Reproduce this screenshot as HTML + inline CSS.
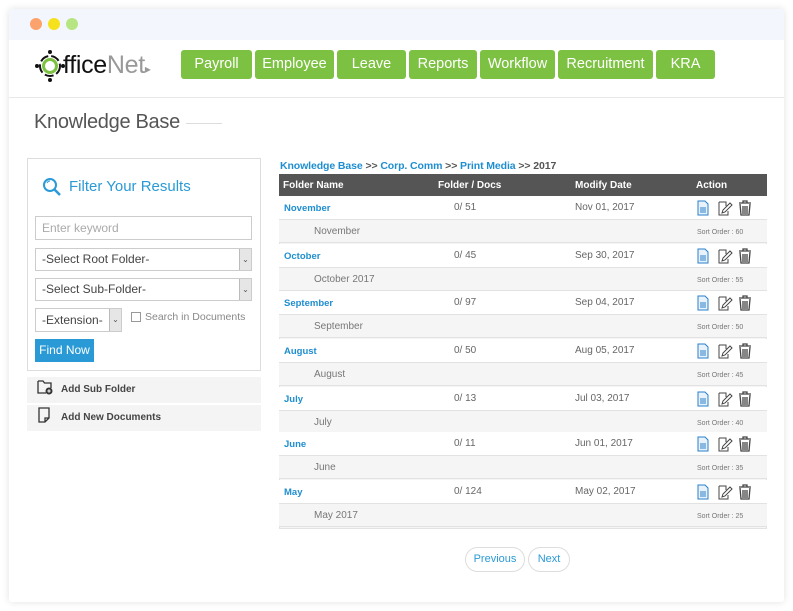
<!DOCTYPE html>
<html><head><meta charset="utf-8">
<style>
*{margin:0;padding:0;box-sizing:border-box}
body{width:793px;height:611px;background:#fff;font-family:"Liberation Sans",Arial,sans-serif;position:relative;overflow:hidden}
.abs{position:absolute}
.card{left:9px;top:9px;width:775px;height:593px;background:#fff;box-shadow:0 0 8px rgba(0,0,0,.12);border-radius:3px}
.bar{left:9px;top:9px;width:775px;height:31px;background:#f3f6fd}
.dot{width:12px;height:12px;border-radius:50%;top:18px}
.nav{top:50px;height:29px;background:#7dc142;color:#fff;font-size:14.5px;line-height:29px;text-align:center;border-radius:3px}
.lnk{color:#1e8ed0}
.th{top:174px;height:22px;background:#555;left:279px;width:488px;color:#fff;font-size:10px;font-weight:bold}
.row{left:279px;width:488px;font-size:10px;color:#666}
.main{background:#fff;border-bottom:1px solid #e2e2e2}
.sub{background:#f5f5f5;border-bottom:1px solid #e2e2e2}
.fld{position:absolute;border:1px solid #ccc;background:#fff;font-size:12px;color:#444;padding-left:6px}
.arr{position:absolute;right:0;top:0;bottom:0;width:12px;background:#e6e6e6;border-left:1px solid #bbb;font-size:8px;text-align:center;color:#555}
</style></head><body>
<div class="abs card"></div>
<div class="abs bar"></div>
<div class="abs dot" style="left:30px;background:#fca26d"></div>
<div class="abs dot" style="left:48px;background:#f6e21c"></div>
<div class="abs dot" style="left:66px;background:#b7e582"></div>
<div class="abs" style="left:9px;top:97px;width:775px;height:1px;background:#e8e8e8"></div>
<svg class="abs" style="left:34px;top:48px" width="32" height="36" viewBox="0 0 32 36">
<circle cx="16" cy="18" r="10" fill="none" stroke="#111" stroke-width="2" stroke-dasharray="9 3"/>
<circle cx="16" cy="18" r="6.5" fill="none" stroke="#7dc142" stroke-width="3"/>
<circle cx="16" cy="4" r="2" fill="#111"/><circle cx="16" cy="32" r="2" fill="#111"/>
<circle cx="3" cy="18" r="2" fill="#111"/><circle cx="29" cy="18" r="2" fill="#111"/>
</svg>
<div class="abs" style="left:63px;top:51px;font-size:25px;letter-spacing:-0.3px;color:#111">ffice<span style="color:#999">Net</span><span style="color:#999;font-size:12px">▸</span></div>
<div class="abs nav" style="left:181px;width:71px">Payroll</div>
<div class="abs nav" style="left:255px;width:79px">Employee</div>
<div class="abs nav" style="left:337px;width:69px">Leave</div>
<div class="abs nav" style="left:409px;width:68px">Reports</div>
<div class="abs nav" style="left:480px;width:75px">Workflow</div>
<div class="abs nav" style="left:558px;width:95px">Recruitment</div>
<div class="abs nav" style="left:656px;width:59px">KRA</div>
<div class="abs" style="left:34px;top:111px;font-size:20px;letter-spacing:-0.3px;color:#555">Knowledge Base</div>
<div class="abs" style="left:186px;top:123px;width:36px;height:1px;background:#ddd"></div>
<div class="abs" style="left:27px;top:158px;width:234px;height:213px;border:1px solid #ddd"></div>
<svg class="abs" style="left:42px;top:177px" width="20" height="20" viewBox="0 0 20 20"><circle cx="8" cy="8" r="6" fill="none" stroke="#2a9ad6" stroke-width="2"/><path d="M12.5 12.5L18 18" stroke="#2a9ad6" stroke-width="2.5"/><path d="M5 6a3.5 3.5 0 0 1 3-2" stroke="#2a9ad6" fill="none"/></svg>
<div class="abs" style="left:69px;top:178px;font-size:15px;color:#2a9ad6">Filter Your Results</div>
<div class="fld" style="left:35px;top:216px;width:217px;height:24px;line-height:22px;color:#aaa">Enter keyword</div>
<div class="fld" style="left:35px;top:248px;width:217px;height:23px;line-height:21px">-Select Root Folder-<div class="arr" style="line-height:21px">⌄</div></div>
<div class="fld" style="left:35px;top:278px;width:217px;height:23px;line-height:21px">-Select Sub-Folder-<div class="arr" style="line-height:21px">⌄</div></div>
<div class="fld" style="left:35px;top:308px;width:87px;height:24px;line-height:22px">-Extension-<div class="arr" style="line-height:22px">⌄</div></div>
<div class="abs" style="left:131px;top:312px;width:10px;height:10px;border:1px solid #999;background:#fff"></div>
<div class="abs" style="left:145px;top:311px;font-size:10.5px;color:#888">Search in Documents</div>
<div class="abs" style="left:35px;top:339px;width:59px;height:23px;background:#2a9ad6;color:#fff;font-size:12px;line-height:23px;text-align:center">Find Now</div>
<div class="abs" style="left:27px;top:377px;width:234px;height:26px;background:#f4f4f4"></div>
<div class="abs" style="left:27px;top:405px;width:234px;height:26px;background:#f4f4f4"></div>
<svg class="abs" style="left:37px;top:379px" width="17" height="16" viewBox="0 0 17 16"><path d="M1 2h5l1.5 2H14v5M1 2v12h8" fill="none" stroke="#333" stroke-width="1.3"/><circle cx="12" cy="12" r="3.5" fill="#333"/><path d="M10.3 12h3.4M12 10.3v3.4" stroke="#fff"/></svg>
<div class="abs" style="left:61px;top:384px;font-size:10px;font-weight:bold;color:#444">Add Sub Folder</div>
<svg class="abs" style="left:38px;top:407px" width="13" height="16" viewBox="0 0 13 16"><path d="M1 1h10v10l-4 4H1z M11 11H7v4" fill="none" stroke="#333" stroke-width="1.3"/></svg>
<div class="abs" style="left:61px;top:412px;font-size:10px;font-weight:bold;color:#444">Add New Documents</div>
<div class="abs" style="left:280px;top:160px;font-size:10.5px;font-weight:bold;color:#555;letter-spacing:-0.1px"><span class="lnk">Knowledge Base</span> &gt;&gt; <span class="lnk">Corp. Comm</span> &gt;&gt; <span class="lnk">Print Media</span> &gt;&gt; 2017</div>
<div class="abs th">
<span class="abs" style="left:4px;top:6px">Folder Name</span>
<span class="abs" style="left:159px;top:6px">Folder / Docs</span>
<span class="abs" style="left:296px;top:6px">Modify Date</span>
<span class="abs" style="left:417px;top:6px">Action</span>
</div>
<div class="abs" style="left:279px;top:196px;width:488px;height:333px;border:1px solid #e2e2e2;border-top:none;background:#f5f5f5"></div>
<div id="rows"></div>
<script>
var d=[["November","0/ 51","Nov 01, 2017","November","60",208],["October","0/ 45","Sep 30, 2017","October 2017","55",256],["September","0/ 97","Sep 04, 2017","September","50",303],["August","0/ 50","Aug 05, 2017","August","45",351],["July","0/ 13","Jul 03, 2017","July","40",399],["June","0/ 11","Jun 01, 2017","June","35",444],["May","0/ 124","May 02, 2017","May 2017","25",492]];
var h="";
d.forEach(function(r){var y=r[5]-12;
h+='<div class="abs row main" style="top:'+y+'px;height:24px"><span class="abs lnk" style="left:5px;top:7px;font-weight:bold;font-size:9.5px">'+r[0]+'</span><span class="abs" style="left:175px;top:6px">'+r[1]+'</span><span class="abs" style="left:296px;top:6px">'+r[2]+'</span>'+
'<svg class="abs" style="left:418px;top:4px" width="60" height="16" viewBox="0 0 60 16"><path d="M1 1h7l3 3v11H1z" fill="#e8f2fb" stroke="#2a7fc9"/><path d="M3 8h6M3 10h6M3 12h6" stroke="#2a7fc9"/><path d="M22 2h7v4M22 2v13h9v-4M25 13l1-3 7-7 2 2-7 7z" fill="none" stroke="#444"/><path d="M42 3h12M46 3V1h4v2M43 4l1 11h8l1-11M46 6v8M48 6v8M50 6v8" fill="none" stroke="#444" stroke-width="1.3"/></svg></div>'+
'<div class="abs row sub" style="top:'+(y+24)+'px;height:23px"><span class="abs" style="left:35px;top:6px;color:#777">'+r[3]+'</span><span class="abs" style="left:418px;top:9px;font-size:7px;color:#777">Sort Order : '+r[4]+'</span></div>';});
document.getElementById("rows").innerHTML=h;
</script>
<div class="abs" style="left:465px;top:547px;width:60px;height:25px;border:1px solid #ddd;border-radius:13px;font-size:11px;color:#2a9ad6;line-height:23px;text-align:center">Previous</div>
<div class="abs" style="left:528px;top:547px;width:42px;height:25px;border:1px solid #ddd;border-radius:13px;font-size:11px;color:#2a9ad6;line-height:23px;text-align:center">Next</div>
</body></html>
